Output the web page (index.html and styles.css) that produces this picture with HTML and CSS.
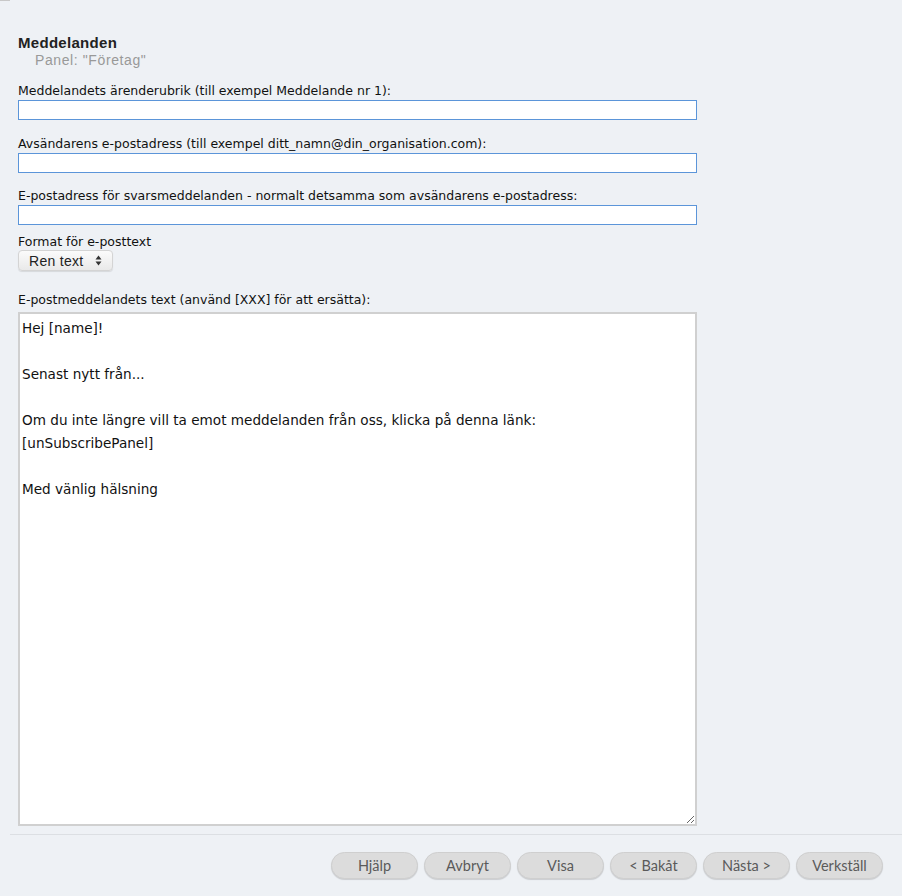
FILE: index.html
```html
<!DOCTYPE html>
<html lang="sv">
<head>
  <meta charset="UTF-8" />
  <title>Meddelanden</title>
  <link rel="stylesheet" href="styles.css">
</head>
<body>

<div class="corner"></div>

<div class="panel">
  <h2>Meddelanden</h2>
  <div class="sub">Panel: "Företag"</div>

  <label class="field">
    <span>Meddelandets ärenderubrik (till exempel Meddelande nr 1):</span>
    <input type="text" class="box" />
  </label>

  <label class="field">
    <span>Avsändarens e-postadress (till exempel ditt_namn@din_organisation.com):</span>
    <input type="text" class="box" />
  </label>

  <label class="field">
    <span>E-postadress för svarsmeddelanden - normalt detsamma som avsändarens e-postadress:</span>
    <input type="text" class="box" />
  </label>

  <div class="format">
    <span>Format för e-posttext</span>
    <div class="select">Ren text
      <svg class="arrows" width="7" height="11" viewBox="0 0 7 11">
        <path d="M3.5 0.5 L6.5 4.5 L0.5 4.5 Z M3.5 10.5 L6.5 6.5 L0.5 6.5 Z" fill="#333"/>
      </svg>
    </div>
  </div>

  <label class="field body-field">
    <span>E-postmeddelandets text (använd [XXX] för att ersätta):</span>
    <textarea class="message">Hej [name]!

Senast nytt från...

Om du inte längre vill ta emot meddelanden från oss, klicka på denna länk:
[unSubscribePanel]

Med vänlig hälsning</textarea>
  </label>
</div>

<div class="footer">
  <button>Hjälp</button>
  <button>Avbryt</button>
  <button>Visa</button>
  <button>&lt; Bakåt</button>
  <button>Nästa &gt;</button>
  <button>Verkställ</button>
</div>

</body>
</html>
```

FILE: styles.css
```css
html, body {
  margin: 0;
  height: 100%;
}
body {
  background: #eef1f5;
  font-family: "DejaVu Sans", Verdana, sans-serif;
  font-size: 12.5px;
  color: #111;
  position: relative;
}
.corner {
  position: absolute;
  left: 0;
  top: 0;
  width: 10px;
  height: 1px;
  background: #c8c8c8;
}
.panel {
  padding: 35px 0 0 18px;
  width: 679px;
}
h2 {
  margin: 0;
  font-family: "Liberation Sans", Arial, sans-serif;
  font-size: 15px;
  letter-spacing: 0.3px;
  font-weight: bold;
  color: #222;
  line-height: 16px;
}
.sub {
  margin: 1px 0 0 17px;
  font-family: "Liberation Sans", Arial, sans-serif;
  font-size: 14px;
  letter-spacing: 0.6px;
  color: #999;
  line-height: 16px;
}
.field {
  display: block;
  margin-top: 15px;
}
.field span,
.format span {
  display: block;
  line-height: 15px;
}
.box {
  display: block;
  box-sizing: border-box;
  width: 679px;
  height: 20px;
  margin: 2px 0 0 0;
  border: 1px solid #5b95d9;
  background: #fff;
  padding: 0 3px;
}
.field + .field {
  margin-top: 15.5px;
}
.format {
  margin-top: 9px;
}
.select {
  display: inline-flex;
  align-items: center;
  gap: 11px;
  margin-top: 1px;
  box-sizing: border-box;
  height: 21px;
  width: 95px;
  padding: 0 0 0 10px;
  border: 1px solid #d4d4d4;
  border-radius: 4px;
  background: linear-gradient(#fbfbfb, #e9e9e9);
  box-shadow: 0 1px 1px rgba(0, 0, 0, 0.1);
  font-family: "Liberation Sans", Arial, sans-serif;
  font-size: 14px;
  letter-spacing: 0.3px;
  color: #222;
}
.select .arrows {
  display: block;
}
.body-field {
  margin-top: 21px;
}
.message {
  display: block;
  box-sizing: border-box;
  width: 679px;
  height: 514px;
  margin-top: 5px;
  border: 2px solid #d0d0d0;
  background: #fff;
  padding: 3px 2px;
  font-family: "DejaVu Sans", Verdana, sans-serif;
  font-size: 13.6px;
  line-height: 23px;
  color: #111;
  resize: vertical;
}
.footer {
  position: absolute;
  left: 10px;
  right: 0;
  top: 834px;
  border-top: 1px solid #dcdfe3;
  display: flex;
  justify-content: flex-end;
  gap: 6px;
  padding: 17px 19px 0 0;
}
.footer button {
  width: 87px;
  height: 27px;
  border: 1px solid #cfcfcf;
  border-radius: 14px;
  background: #dcdcdc;
  box-shadow: 0 1px 1px rgba(0, 0, 0, 0.15);
  font-family: Lato, "Open Sans", sans-serif;
  font-size: 14.5px;
  color: #5a5a5a;
  cursor: pointer;
}
```
